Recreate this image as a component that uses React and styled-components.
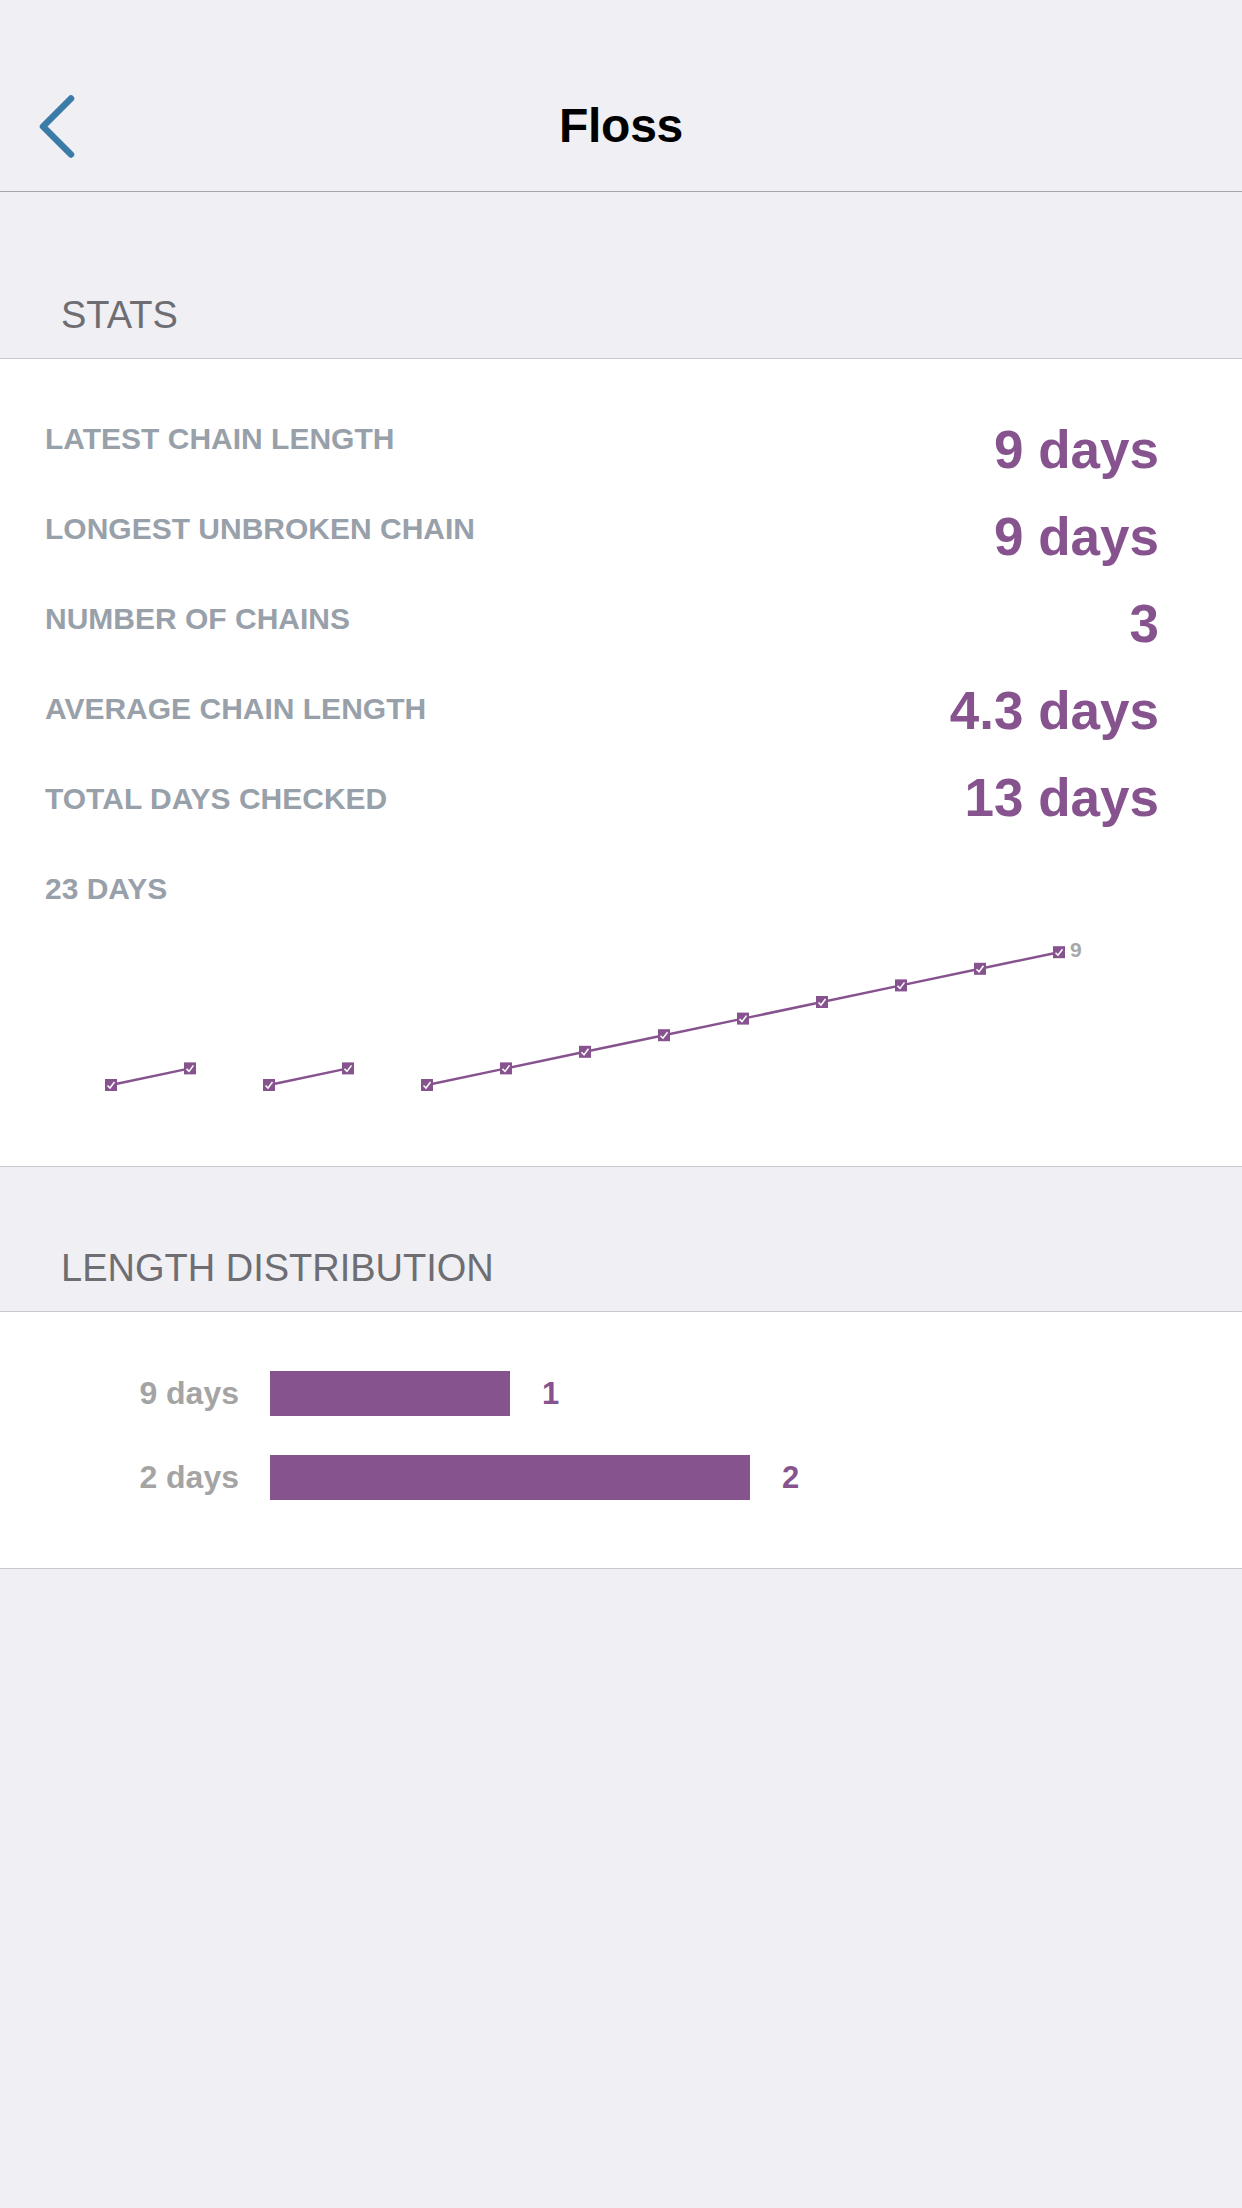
import styled, { createGlobalStyle } from 'styled-components';

const PURPLE = '#86538f';

const GlobalStyle = createGlobalStyle`
  html, body {
    margin: 0;
    padding: 0;
    background: #efeff4;
  }
  body {
    font-family: 'Liberation Sans', Arial, sans-serif;
    -webkit-font-smoothing: antialiased;
  }
`;

const Page = styled.div`
  width: 1242px;
  min-height: 2208px;
  background: #efeff4;
`;

const NavBar = styled.header`
  padding-top: 60px;
  height: 131px;
  display: grid;
  grid-template-columns: 1fr auto 1fr;
  align-items: center;
  border-bottom: 1px solid #a7a7ab;
`;

const BackButton = styled.svg`
  width: 50px;
  height: 72px;
  margin-left: 30px;
`;

const Title = styled.h1`
  margin: 0;
  font-size: 48px;
  line-height: 60px;
  font-weight: 700;
  letter-spacing: -0.3px;
  color: #000;
`;

const SectionHeader = styled.div`
  padding: ${(p) => p.$top}px 0 24px 61px;
  font-size: 38px;
  line-height: 38px;
  color: #6d6d72;
`;

const Card = styled.section`
  background: #fff;
  border-top: 1px solid #c8c7cc;
  border-bottom: 1px solid #c8c7cc;
  padding: ${(p) => p.$pad};
`;

const StatsGrid = styled.div`
  display: flex;
  justify-content: space-between;
  align-items: flex-start;
  padding: 0 83px 0 45px;
`;

const LabelColumn = styled.div`
  display: flex;
  flex-direction: column;
  gap: 60px;
`;

const ValueColumn = styled.div`
  display: flex;
  flex-direction: column;
  align-items: flex-end;
  gap: 34px;
  margin-top: -1px;
`;

const StatLabel = styled.div`
  font-size: 30px;
  line-height: 30px;
  font-weight: 700;
  color: #98a0aa;
`;

const StatValue = styled.div`
  font-size: 53px;
  line-height: 53px;
  font-weight: 700;
  color: ${PURPLE};
`;

const Chart = styled.svg`
  display: block;
  width: 1242px;
  height: 262px;
`;

const DistList = styled.div`
  display: flex;
  flex-direction: column;
  gap: 39px;
`;

const DistRow = styled.div`
  display: flex;
  align-items: center;
  height: 45px;
`;

const DistLabel = styled.div`
  width: 239px;
  text-align: right;
  font-size: 32px;
  font-weight: 700;
  color: #a4a4a4;
`;

const Bar = styled.div`
  height: 45px;
  margin-left: 31px;
  background: ${PURPLE};
`;

const DistCount = styled.div`
  margin-left: 32px;
  font-size: 31px;
  font-weight: 700;
  color: ${PURPLE};
`;

const stats = [
  { label: 'LATEST CHAIN LENGTH', value: '9 days' },
  { label: 'LONGEST UNBROKEN CHAIN', value: '9 days' },
  { label: 'NUMBER OF CHAINS', value: '3' },
  { label: 'AVERAGE CHAIN LENGTH', value: '4.3 days' },
  { label: 'TOTAL DAYS CHECKED', value: '13 days' },
];

const chains = [2, 2, 9];

const distribution = [
  { label: '9 days', count: 1 },
  { label: '2 days', count: 2 },
];

// chart geometry, one step per checked day
const X0 = 111;
const STEP_X = 79;
const BASE_Y = 181;
const STEP_Y = 16.6;

const ChainChart = () => {
  let i = 0;
  const lines = chains.map((len) => {
    const pts = [];
    for (let n = 1; n <= len; n++) {
      pts.push({ x: X0 + i * STEP_X, y: BASE_Y - (n - 1) * STEP_Y });
      i++;
    }
    return pts;
  });
  const last = lines[lines.length - 1];
  const end = last[last.length - 1];

  return (
    <Chart viewBox="0 0 1242 262">
      {lines.map((pts, k) => (
        <polyline
          key={k}
          points={pts.map((p) => `${p.x},${p.y}`).join(' ')}
          fill="none"
          stroke={PURPLE}
          strokeWidth="2.5"
        />
      ))}
      {lines.flat().map((p, k) => (
        <g key={k}>
          <rect x={p.x - 6} y={p.y - 6} width="12" height="12" fill={PURPLE} />
          <polyline
            points={`${p.x - 3.5},${p.y + 0.5} ${p.x - 1},${p.y + 3} ${p.x + 3.5},${p.y - 3}`}
            fill="none"
            stroke="#fff"
            strokeWidth="1.5"
          />
        </g>
      ))}
      <text
        x={end.x + 11}
        y={end.y + 5}
        fontSize="21"
        fontWeight="700"
        fill="#a8a8a8"
        fontFamily="'Liberation Sans', Arial, sans-serif"
      >
        {last.length}
      </text>
    </Chart>
  );
};

const App = () => {
  return (
    <Page>
      <GlobalStyle />
      <NavBar>
        <BackButton viewBox="0 0 50 72">
          <path
            d="M41 8.5 L13 36.5 L41 64.5"
            fill="none"
            stroke="#3a7ba8"
            strokeWidth="6.5"
            strokeLinecap="round"
            strokeLinejoin="round"
          />
        </BackButton>
        <Title>Floss</Title>
        <div />
      </NavBar>

      <SectionHeader $top={104}>STATS</SectionHeader>
      <Card $pad="65px 0 0 0">
        <StatsGrid>
          <LabelColumn>
            {stats.map((s) => (
              <StatLabel key={s.label}>{s.label}</StatLabel>
            ))}
            <StatLabel>23 DAYS</StatLabel>
          </LabelColumn>
          <ValueColumn>
            {stats.map((s) => (
              <StatValue key={s.label}>{s.value}</StatValue>
            ))}
          </ValueColumn>
        </StatsGrid>
        <ChainChart />
      </Card>

      <SectionHeader $top={82}>LENGTH DISTRIBUTION</SectionHeader>
      <Card $pad="59px 0 68px 0">
        <DistList>
          {distribution.map((d) => (
            <DistRow key={d.label}>
              <DistLabel>{d.label}</DistLabel>
              <Bar style={{ width: d.count * 240 }} />
              <DistCount>{d.count}</DistCount>
            </DistRow>
          ))}
        </DistList>
      </Card>
    </Page>
  );
};

export default App;
